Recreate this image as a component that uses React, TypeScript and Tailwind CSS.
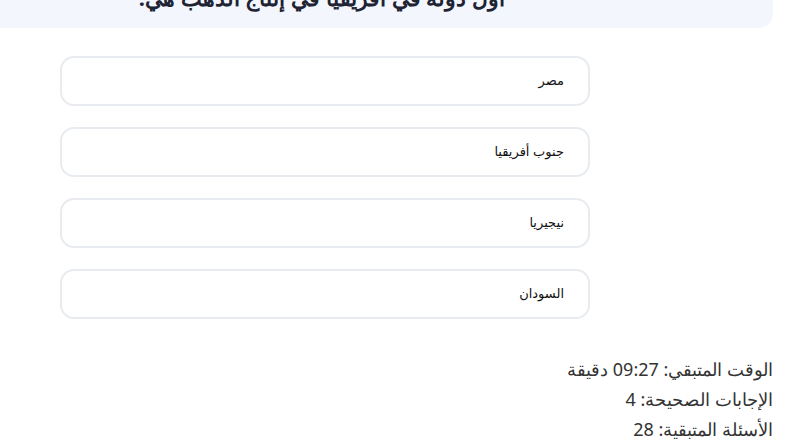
import React from 'react';

const options = ['مصر', 'جنوب أفريقيا', 'نيجيريا', 'السودان'];

const App: React.FC = () => {
  return (
    <div dir="rtl" className="w-[800px] h-[445px] overflow-hidden bg-white" style={{ fontFamily: '"Noto Sans", "Open Sans", sans-serif' }}>
      <div className="-mt-[19px] mr-[27px] bg-[#f3f6fd] rounded-br-[14px] pr-[268px] pb-[15px]">
        <h1 className="text-[22px] leading-[32px] font-bold text-[#1e2433] text-right">
          أول دولة في أفريقيا في إنتاج الذهب هي:
        </h1>
      </div>

      <div className="pt-[28px] pr-[210px] flex flex-col gap-[21px]">
        {options.map(opt => (
          <button
            key={opt}
            className="w-[530px] h-[50px] border-2 border-[#e8ebf0] rounded-[14px] bg-white text-right pr-[24px] text-[13px] text-[#111] pb-[1px]"
            style={{ fontFamily: '"Liberation Sans", "DejaVu Sans", sans-serif' }}
          >
            {opt}
          </button>
        ))}
      </div>

      <div className="pt-[35px] pr-[27px] text-[18px] leading-[30px] text-[#333]">
        <p>الوقت المتبقي: 09:27 دقيقة</p>
        <p>الإجابات الصحيحة: 4</p>
        <p>الأسئلة المتبقية: 28</p>
      </div>
    </div>
  );
};

export default App;
